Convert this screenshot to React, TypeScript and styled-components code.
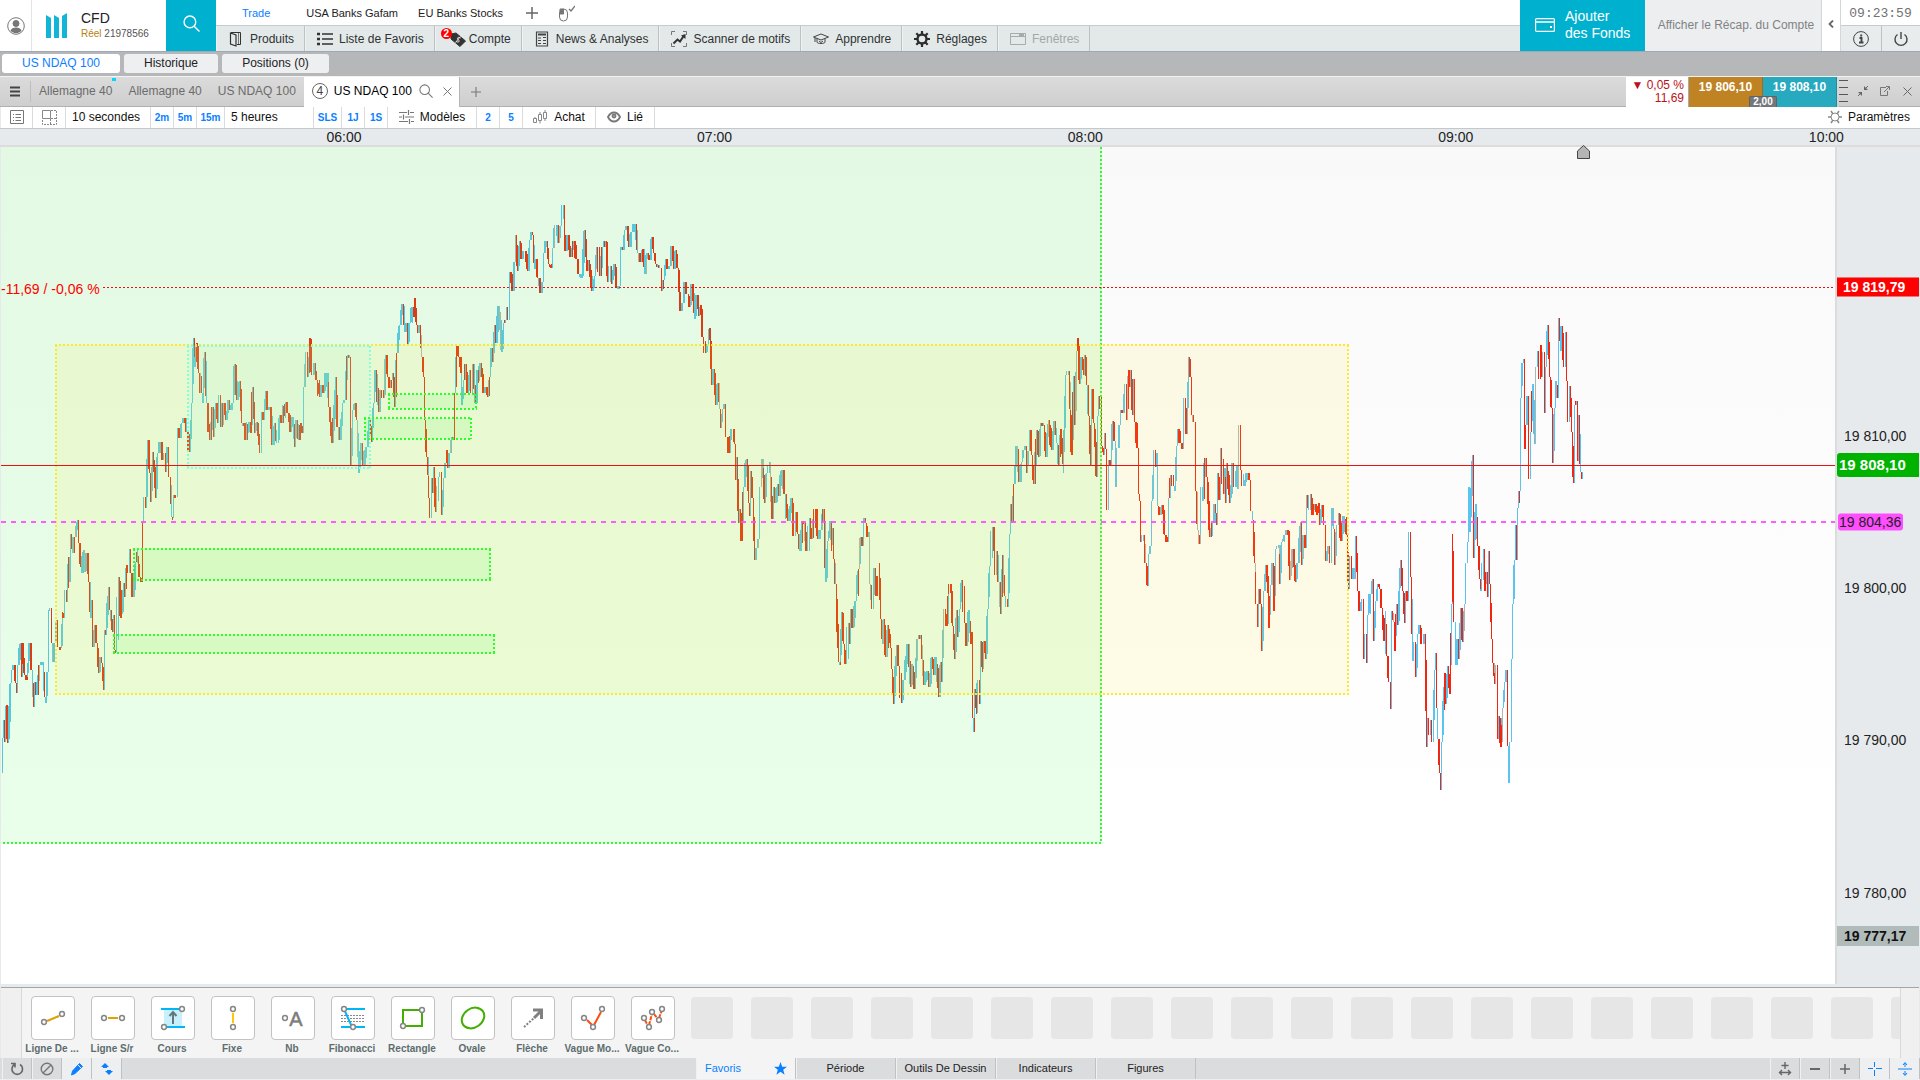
import React from "react";
import styled, { createGlobalStyle } from "styled-components";

const blue = "#0a80ff";
const teal = "#00b1cf";
const line = "#c3c8ca";

const Global = createGlobalStyle`
  * { box-sizing: border-box; }
  body { margin: 0; background: #fff; }
  body, button { font-family: "Liberation Sans", Arial, sans-serif; font-size: 12px; color: #222; }
  button { border: 0; margin: 0; padding: 0; background: none; cursor: pointer; white-space: nowrap; }
  svg { display: block; flex: none; }
`;

const Page = styled.div`
  display: flex;
  flex-direction: column;
  min-height: 100vh;
  overflow: hidden;
  background: #e6eaed;
`;

/* ---------- header ---------- */
const Header = styled.header`
  display: flex;
  height: 52px;
  background: #fff;
  border-bottom: 1px solid #9fa8b8;
`;
const Avatar = styled.button`
  width: 32px;
  display: grid;
  place-items: center;
  border-right: 1px solid #e2e4e5;
`;
const Brand = styled.div`
  width: 134px;
  display: flex;
  align-items: center;
  gap: 14px;
  padding-left: 14px;
`;
const BrandName = styled.div`
  font-size: 14px;
  line-height: 17px;
  color: #222;
`;
const BrandSub = styled.div`
  font-size: 10px;
  line-height: 14px;
  color: #555;
  white-space: nowrap;
  b { font-weight: 400; color: #b8800f; }
`;
const SearchButton = styled.button`
  width: 50px;
  display: grid;
  place-items: center;
  padding-bottom: 4px;
  background: ${teal};
`;
const HeaderMain = styled.div`
  flex: 1;
  min-width: 0;
`;
const Workspaces = styled.nav`
  display: flex;
  align-items: center;
  height: 25px;
  padding-left: 26px;
`;
const Workspace = styled.button<{ $active?: boolean; $gap: number }>`
  margin-right: ${(p) => p.$gap}px;
  font-size: 11px;
  color: ${(p) => (p.$active ? blue : "#222")};
`;
const WorkspaceIcon = styled.button`
  margin: 0 8px;
  width: 18px;
  display: grid;
  place-items: center;
`;
const MainNav = styled.nav`
  display: flex;
  height: 26px;
  background: #e3e9e9;
  border-top: 1px solid #c6cbcb;
`;
const NavItem = styled.button`
  display: flex;
  align-items: center;
  gap: 6px;
  padding: 0 10px 0 12px;
  border-right: 1px solid #bcc1c2;
  box-shadow: inset 1px 0 #eef2f2;
  color: #303234;
  &:disabled { color: #a2a7a8; }
`;
const IconBox = styled.span`
  position: relative;
  width: 16px;
  height: 20px;
  display: grid;
  place-items: center;
`;
const Badge = styled.span`
  position: absolute;
  left: -6px;
  top: -1px;
  width: 11px;
  height: 11px;
  border-radius: 6px;
  background: #f00;
  color: #fff;
  font: bold 10px/11px "Liberation Sans", sans-serif;
  text-align: center;
`;
const AddFunds = styled.button`
  width: 125px;
  display: flex;
  align-items: center;
  gap: 10px;
  padding: 0 0 2px 15px;
  background: ${teal};
  color: #fff;
  font-size: 14px;
  line-height: 17px;
  text-align: left;
`;
const Recap = styled.button`
  width: 177px;
  background: #edeef0;
  border-right: 1px solid #d4d6d8;
  color: #808284;
  padding: 0 0 2px 6px;
`;
const Collapse = styled.button`
  width: 19px;
  display: grid;
  place-items: center;
  border-right: 1px solid #d4d6d8;
  padding-bottom: 4px;
`;
const SystemBox = styled.div`
  width: 79px;
`;
const Clock = styled.div`
  height: 25px;
  font: 13px/27px "Liberation Mono", monospace;
  color: #707274;
  text-align: center;
`;
const SystemButtons = styled.div`
  display: grid;
  grid-template-columns: 1fr 1fr;
  height: 26px;
  border-top: 1px solid #c6cbcb;
  background: #e8ecec;
`;
const SystemButton = styled.button`
  display: grid;
  place-items: center;
  & + & { border-left: 1px solid #bcc1c2; }
`;

/* ---------- window tabs ---------- */
const ModuleBar = styled.nav`
  display: flex;
  gap: 4px;
  height: 24px;
  padding: 2px 2px 3px;
  background: #b6b7b9;
`;
const ModuleTab = styled.button<{ $active?: boolean; $w: number }>`
  width: ${(p) => p.$w}px;
  padding-bottom: 2px;
  border-radius: 3px;
  background: ${(p) => (p.$active ? "#fff" : "#eeeff1")};
  color: ${(p) => (p.$active ? blue : "#222")};
`;
const TabRow = styled.div`
  display: flex;
  height: 31px;
  border-top: 1px solid #f2f2f2;
  background: linear-gradient(#dbdbdb, #cecece);
`;
const TabStrip = styled.div`
  flex: 1;
  display: flex;
  border-bottom: 1px solid #b0b0b0;
`;
const MenuButton = styled.button`
  width: 31px;
  margin: 4px 0;
  display: grid;
  place-items: center;
  border-right: 1px solid #bdbdbd;
`;
const ChartTab = styled.button<{ $new?: boolean }>`
  position: relative;
  padding: 0 8px 2px;
  color: #6b6b6b;
  &::after {
    content: "";
    display: ${(p) => (p.$new ? "block" : "none")};
    position: absolute;
    right: 4px;
    top: 1px;
    width: 4px;
    height: 3px;
    background: #00d8ff;
  }
`;
const ActiveTab = styled.div`
  display: flex;
  align-items: center;
  gap: 6px;
  width: 156px;
  padding: 0 0 2px 8px;
  margin-bottom: -1px;
  background: #fff;
  border-right: 1px solid #b5b5b5;
  color: #000;
  white-space: nowrap;
`;
const Count = styled.span`
  width: 16px;
  height: 16px;
  border: 1px solid #666;
  border-radius: 8px;
  text-align: center;
  line-height: 14px;
  color: #444;
`;
const AddTab = styled.button`
  width: 32px;
  display: grid;
  place-items: center;
`;
const Change = styled.div`
  width: 62px;
  padding: 2px 4px 0 0;
  background: #fff;
  text-align: right;
  font-size: 12px;
  line-height: 13px;
  color: #bb1119;
`;
const Quotes = styled.div`
  position: relative;
  display: flex;
  margin-right: 4px;
  border-left: 1px solid #aaa;
`;
const Quote = styled.button<{ $bg: string }>`
  width: 74px;
  padding-bottom: 10px;
  background: ${(p) => p.$bg};
  color: #fff;
  font-weight: bold;
  border-right: 1px solid rgba(60, 60, 60, 0.3);
`;
const Spread = styled.span`
  position: absolute;
  left: 60px;
  bottom: 0;
  width: 28px;
  height: 11px;
  background: #74787a;
  border: 1px solid #5f6365;
  border-bottom: 0;
  border-radius: 2px 2px 0 0;
  color: #fff;
  font: bold 10px/10px "Liberation Sans", sans-serif;
  text-align: center;
`;
const WindowTools = styled.div`
  display: flex;
  align-items: center;
  gap: 6px;
  width: 81px;
  margin-left: -2px;
  padding-bottom: 1px;
  border-bottom: 1px solid #b0b0b0;
`;
const WindowButton = styled.button`
  width: 16px;
  display: grid;
  place-items: center;
`;

/* ---------- chart toolbar ---------- */
const Toolbar = styled.div`
  display: flex;
  height: 21px;
  margin-left: 1px;
  background: #fff;
`;
const ToolCell = styled.button<{ $w: number; $quick?: boolean; $left?: boolean }>`
  display: flex;
  align-items: center;
  justify-content: ${(p) => (p.$left ? "flex-start" : "center")};
  padding: 0 0 1px ${(p) => (p.$left ? 6 : 0)}px;
  gap: 6px;
  width: ${(p) => p.$w}px;
  border-right: 1px solid #d9dcde;
  color: ${(p) => (p.$quick ? blue : "#111")};
  font-size: ${(p) => (p.$quick ? 10 : 12)}px;
  font-weight: ${(p) => (p.$quick ? "bold" : "normal")};
`;
const Settings = styled.button`
  display: flex;
  align-items: center;
  gap: 6px;
  margin-left: auto;
  padding: 0 10px 1px 0;
  color: #111;
`;

/* ---------- chart ---------- */
const TimeAxis = styled.div`
  position: relative;
  height: 19px;
  border-top: 1px solid ${line};
  border-bottom: 2px solid #dcdcdc;
  background: #e6eaed;
`;
const TimeLabel = styled.span`
  position: absolute;
  top: 0;
  transform: translateX(-50%);
  font-size: 14px;
  line-height: 16px;
`;
const ChartRow = styled.div`
  flex: 1;
  display: flex;
  min-height: 480px;
  padding: 0 1px;
`;
const Plot = styled.div`
  position: relative;
  flex: 1;
  min-width: 0;
  background: linear-gradient(#f9f9f9, #fff 85%);
`;
const PlotSvg = styled.svg`
  position: absolute;
  inset: 0;
  width: 100%;
  height: 100%;
  overflow: visible;
`;
const Variation = styled.span`
  position: absolute;
  left: 0;
  transform: translateY(-50%);
  padding-top: 3px;
  color: #f00;
  font-size: 14px;
  line-height: 16px;
`;
const PriceAxis = styled.div`
  position: relative;
  width: 84px;
  border-left: 2px solid #dcdcdc;
`;
type TagKind = "plain" | "open" | "last" | "level" | "low";
const tagCss: Record<TagKind, string> = {
  plain: "padding-left: 7px; height: 20px; color: #222;",
  open: "padding-left: 6px; height: 19px; background: #f00; color: #fff; font-weight: bold;",
  last: "padding-left: 2px; height: 24px; background: #00b300; color: #fff; font-weight: bold; font-size: 15px; border-radius: 3px 0 0 3px;",
  level: "left: 1px; right: 16px; padding-left: 1px; height: 17px; background: #ff4dff; color: #222; border-radius: 3px;",
  low: "padding-left: 7px; height: 20px; background: #b1bbb9; color: #111; font-weight: bold;",
};
const PriceTag = styled.span<{ $kind: TagKind }>`
  position: absolute;
  left: 0;
  right: 0;
  display: flex;
  align-items: center;
  transform: translateY(-50%);
  font-size: 14px;
  white-space: nowrap;
  ${(p) => tagCss[p.$kind]}
`;

/* ---------- drawing tools ---------- */
const Palette = styled.div`
  display: flex;
  height: 74px;
  margin: 0 1px;
  border-top: 3px solid #e6eaed;
  background: #f4f4f4;
  box-shadow: inset 0 1px #a3a6a9;
`;
const Gutter = styled.div<{ $right?: boolean }>`
  width: ${(p) => (p.$right ? 19 : 21)}px;
  margin-top: 1px;
  background: #f0f0f0;
  border: solid #d6d8da;
  border-width: ${(p) => (p.$right ? "0 0 0 1px" : "0 1px 0 0")};
`;
const Tools = styled.div`
  flex: 1;
  min-width: 0;
  display: flex;
  overflow: hidden;
  padding-top: 9px;
`;
const Tool = styled.button`
  flex: none;
  width: 60px;
  display: flex;
  flex-direction: column;
  align-items: center;
  gap: 3px;
  padding-left: 2px;
`;
const ToolFace = styled.span`
  width: 44px;
  height: 44px;
  display: grid;
  place-items: center;
  background: #fff;
  border: 1px solid #c2c2c2;
  border-radius: 4px;
`;
const ToolName = styled.span`
  margin-left: -2px;
  text-align: center;
  font-size: 10px;
  line-height: 12px;
  font-weight: bold;
  color: #5d6d6e;
`;
const Slot = styled.div`
  flex: none;
  width: 42px;
  height: 42px;
  margin: 1px 9px;
  background: #e6e6e6;
  border-radius: 4px;
`;

/* ---------- footer ---------- */
const Footer = styled.footer`
  display: flex;
  height: 22px;
  padding: 0 0 0 2px;
  border-bottom: 1px solid #eceeef;
  background: #dbdcde;
`;
const FootButton = styled.button<{ $on?: boolean }>`
  width: 30px;
  display: grid;
  place-items: center;
  border-right: 1px solid #bfc1c3;
  box-shadow: inset 1px 0 #f0f0f1;
  background: ${(p) => (p.$on ? "#eeeff1" : "transparent")};
`;
const Spacer = styled.div<{ $grow: number }>`
  flex: ${(p) => p.$grow} 0 0;
`;
const FootTab = styled.button<{ $active?: boolean }>`
  width: 100px;
  display: flex;
  align-items: center;
  justify-content: ${(p) => (p.$active ? "space-between" : "center")};
  padding: ${(p) => (p.$active ? "0 8px 1px 9px" : "0 0 1px")};
  border-right: 1px solid #bfc1c3;
  box-shadow: inset 1px 0 #f0f0f1;
  background: ${(p) => (p.$active ? "#f4f4f4" : "transparent")};
  color: ${(p) => (p.$active ? blue : "#222")};
  font-size: 11px;
`;

/* ---------- small icons ---------- */
type IconProps = { w?: number; h?: number; box?: string; color?: string; sw?: number; children: React.ReactNode };
const Icon = ({ w = 16, h = 16, box, color = "#444", sw = 1, children }: IconProps) => (
  <svg width={w} height={h} viewBox={box ?? `0 0 ${w} ${h}`} fill="none" stroke={color} strokeWidth={sw} aria-hidden="true">
    {children}
  </svg>
);
const Dot = ({ x, y }: { x: number; y: number }) => <circle cx={x} cy={y} r="2.4" stroke="#858585" strokeWidth="1.5" fill="#fff" />;

const navItems: { name: string; icon: React.ReactNode; badge?: string; off?: boolean }[] = [
  { name: "Produits", icon: <Icon color="#333"><path d="M3 1.500h9.500v12H9" /><path d="M2.500 2L8 4v11L2.500 13z" strokeWidth="1.200" /><path d="M10.500 2v11" stroke="#777" /></Icon> },
  { name: "Liste de Favoris", icon: <Icon sw={1.6} color="#333"><path d="M5 3h11M5 8h11M5 13h11" /><path d="M0 3h3M0 8h3M0 13h3" strokeWidth="2.600" /></Icon> },
  { name: "Compte", badge: "2", icon: <Icon w={20}><path d="M4 3l5-1 9.500 8-5.500 5.500L4 8z" fill="#333" stroke="#333" strokeLinejoin="round" /><path d="M13.500 7c-3-2-4 1-2 2s0 3-2.500 1.500M13.500 5.500l-5 6" stroke="#e3e9e9" /></Icon> },
  { name: "News & Analyses", icon: <Icon><path d="M2.500 1h11v14h-11z" strokeWidth="1.2" /><path d="M4 3.500h8" strokeWidth="2" /><path d="M4 7h3M9 6.500h3M4 9.500h3M9 9.500h3M4 12.500h3M9 12.500h3" /></Icon> },
  { name: "Scanner de motifs", icon: <Icon color="#333"><path d="M.5 4V.5H4M12 .5h3.500V4M15.500 12v3.500H12M4 15.500H.5V12" stroke="#777" /><path d="M2.500 12.500l4-4 2.500 2 4-6" strokeWidth="2" /><path d="M10 4.500l4.500-1.500v5z" fill="#333" stroke="none" /></Icon> },
  { name: "Apprendre", icon: <Icon><path d="M.5 6L8 3l7.500 3L8 9zM4 7.500v3.500c0 2 8 2 8 0V7.500M2 7v4M6 10l2 1.500 2-1.500" /></Icon> },
  { name: "Réglages", icon: <Icon color="#2d2d2d"><circle cx="8" cy="8" r="4.500" strokeWidth="2.400" /><path d="M8 0v3M8 13v3M0 8h3M13 8h3M2.300 2.300l2.200 2.200M11.500 11.500l2.200 2.200M13.700 2.300l-2.200 2.200M4.500 11.500l-2.200 2.200" strokeWidth="2.200" /></Icon> },
  { name: "Fenêtres", off: true, icon: <Icon color="#a5aaaa"><path d="M.5 2.500h15v11H.5zM.5 5.500h15" /><path d="M9 4h5" strokeWidth="2" /></Icon> },
];

const gold = "#e0a000";
const cyan = "#00b7f5";
const green = "#41b000";
const orange = "#ff4c0d";
const tools: { name: string; art: React.ReactNode }[] = [
  { name: "Ligne De ...", art: <><path d="M8 20l12-5" stroke={gold} strokeWidth="2" /><Dot x={5} y={21} /><Dot x={23} y={13} /></> },
  { name: "Ligne S/r", art: <><path d="M9 17h10" stroke={gold} strokeWidth="2" /><Dot x={5} y={17} /><Dot x={23} y={17} /></> },
  { name: "Cours", art: <><path d="M5 8h18v18H5z" fill="#c8effc" stroke="none" /><path d="M2 8h18M8 26h18" stroke={cyan} strokeWidth="2" /><path d="M14 23V12M10.500 15l3.500-4 3.500 4" stroke="#66777c" strokeWidth="2" /><Dot x={23} y={8} /><Dot x={5} y={26} /></> },
  { name: "Fixe", art: <><path d="M14 12v10" stroke="#ffc800" strokeWidth="2" /><Dot x={14} y={8} /><Dot x={14} y={26} /></> },
  { name: "Nb", art: <><Dot x={6} y={17} /><text x="17" y="25" textAnchor="middle" fontSize="20" fontFamily="Liberation Sans, sans-serif" fill="#7c7c7c" stroke="#7c7c7c" strokeWidth=".5">A</text></> },
  { name: "Fibonacci", art: <><path d="M2 14.500h24M2 17.500h24M2 20.500h24" stroke="#888" strokeDasharray="2 1" /><path d="M8 8h18M2 26h24M5 8l8 18" stroke={cyan} strokeWidth="2" /><Dot x={5} y={8} /><Dot x={14} y={26} /></> },
  { name: "Rectangle", art: <><path d="M4 9h19v16H4z" stroke={green} strokeWidth="2" /><Dot x={23} y={9} /><Dot x={4} y={25} /></> },
  { name: "Ovale", art: <ellipse cx="14" cy="17" rx="12" ry="9.500" transform="rotate(-35 14 17)" stroke={green} strokeWidth="2" /> },
  { name: "Flèche", art: <><path d="M5 26l10-9" stroke="#808080" strokeWidth="2" strokeDasharray="2 1.500" /><path d="M15 17l7-7M14 9h8.500v9" stroke="#808080" strokeWidth="3" /></> },
  { name: "Vague Mo...", art: <><path d="M8 19l5 5M15 24l7-13" stroke={orange} strokeWidth="2" /><Dot x={5} y={17} /><Dot x={14} y={26} /><Dot x={23} y={8} /></> },
  { name: "Vague Co...", art: <><path d="M6 19l3 6M10 24l3-11M15 13l4 5M20 17l3-8" stroke={orange} strokeWidth="2" strokeDasharray="4 1" /><Dot x={5} y={17} /><Dot x={10} y={26} /><Dot x={13} y={11} /><Dot x={20} y={19} /><Dot x={23} y={8} /></> },
];

/* ---------- price series ----------
   Each run keeps its turning points on its own grid: origin plus units per pixel. */
type Run = { x0: number; y0: number; kx: number; ky: number; pts: string };
const runs: Run[] = [
  {
    x0: 0, y0: 260, kx: 2.8, ky: 3,
    pts: `7,1540 7,1435 10,1380 15,1445 20,1335 21,1450 30,1270 33,1230 40,1215 45,1270 48,1300 50,1215 58,1150 62,1250 63,1150 70,1245 77,1260 85,1150 90,1230 95,1340 99,1265 105,1305 112,1215 119,1205 125,1310 128,1330 135,1235 136,1050 141,1045 145,1150 149,1205 155,1150 160,1080 164,1160 170,1165 175,1055 180,1075 183,990 187,1025 192,890 195,965 198,822 204,880 210,830 219,780 222,850 229,940 234,870 238,935 243,880 250,965 256,1075 257,1020 260,1160 266,1095 272,1150 277,1240 282,1190 285,1210 290,1290 293,1110 298,1125 306,980 309,1050 316,1115 320,1065 323,1170 326,1175 332,975 333,950 339,1075 346,970 350,1010 356,915 360,940 364,868 367,938 374,1010 380,905 385,870 392,950 397,965 401,790 405,710 408,745 413,540 419,640 424,725 429,575 436,715 441,580 450,545 456,600 460,580 464,635 471,562 475,650 481,770 485,775 488,705 494,710 498,505 505,535 510,490 517,475 523,515 531,575 537,430 542,235 547,320 553,248 558,340 565,400 569,430 575,275 580,430 589,540 597,440 597,530 605,430 611,490 615,405 620,500 627,430 632,480 640,420 645,450 653,430 659,313 664,420 671,362 677,490 684,490 690,540 700,485 703,520 708,380 713,520 719,485 729,580 733,455 738,480 744,393 750,450 757,440 765,555 771,490 777,550 783,465 790,490 800,425 807,460 814,515 819,470 825,560 831,480 836,540 842,490 847,520 850,380 858,275 862,350 869,235 875,345 881,310 888,360 896,410 902,375 908,400 915,340 922,440 932,550 940,350 947,500 952,540 960,430 966,420 973,285 979,292 982,615 988,450 995,430 1000,480 1006,640 1012,550 1020,615 1028,560 1036,480 1041,545 1047,430 1052,330 1060,455 1068,390 1074,415 1080,285 1086,350 1092,385 1098,360 1101,340 1106,440 1112,280 1120,195 1129,133 1134,215 1140,190 1141,255 1148,190 1155,140 1158,170 1163,115 1168,195 1174,220 1176,195 1181,290 1187,350 1190,480 1195,590 1202,715 1205,775 1209,655 1213,700 1216,620 1222,755 1228,650 1233,635 1237,765 1243,655 1248,610 1250,570 1254,625 1260,580 1266,530 1271,540 1275,400 1280,258 1285,290 1292,340 1294,435 1300,360 1306,312 1311,400 1316,330 1320,400 1324,312 1332,430 1337,330 1340,370 1347,310 1354,400 1360,380 1366,410 1372,350 1377,265 1381,305 1386,195 1390,250 1398,138 1405,275 1410,190 1416,180 1420,140 1424,180 1427,35`,
  },
  {
    x0: 500, y0: 180, kx: 2.529, ky: 2.8,
    pts: `24,257 32,310 37,230 40,155 46,255 50,172 56,220 62,200 70,255 75,168 80,145 84,155 88,250 92,220 96,275 103,315 109,285 112,205 120,172 124,235 131,245 135,190 143,127 149,175 155,130 161,70 165,200 172,155 179,215 187,170 195,220 200,262 208,275 215,140 219,255 226,225 233,310 240,270 246,187 252,268 260,187 268,172 274,285 280,240 284,290 289,235 296,300 304,298 305,187 310,195 316,140 320,130 325,188 333,145 342,122 349,205 356,230 362,192 367,262 373,205 380,225 384,160 389,205 394,235 400,238 406,245 409,312 415,280 419,220 424,250 430,240 436,185 441,250 446,197 450,245 457,368 463,345 469,285 474,320 480,355 486,290 494,390 499,322 503,380 508,350 514,440 520,485 525,460 530,415 536,575 541,530 547,630 552,568 557,640 560,695 565,640 570,628 573,720 580,765 588,698 594,740 597,840 600,775 604,960 607,920 612,1010 616,860 625,782 629,905 632,942 635,815 641,890 646,1065 651,1030 656,1005 659,860 664,780 671,905 676,820 682,790 688,950 692,860 696,905 703,850 706,885 716,812 722,880 729,955 738,890 742,998 748,930 753,990 758,1040 765,955 770,960 777,1040 783,945 790,1005 798,922 804,1005 811,980 820,922 825,1125 830,1010 837,955 838,1040 843,975 846,1060 850,1130 857,1350 861,1355 866,1210 870,1300 876,1355 882,1240 885,1300 888,1200 892,1255 900,1180 907,1090 912,1000 917,1025 920,945 926,960 930,1000 933,985 936,1130 942,1200 948,1085 952,1165 957,1110 960,1072 964,1230 969,1298 972,1230 977,1335 981,1245 988,1310 992,1370 997,1468 1004,1302 1010,1360 1016,1465 1022,1400 1032,1300 1040,1420 1043,1355 1050,1425 1057,1285 1065,1275 1072,1415 1082,1375 1085,1420 1092,1335 1098,1385 1102,1335 1110,1448 1115,1350 1118,1405 1124,1200 1130,1250 1134,1160 1140,1132 1146,1250 1151,1340 1155,1205 1158,1280 1164,1200 1169,1120 1175,1240 1181,1305 1187,1205 1191,1300 1195,1265 1196,1505 1200,1545 1201,1425 1205,1495 1210,1400 1213,1468 1216,1290 1220,1378 1224,1290 1230,1340 1235,1200 1240,1080 1246,972 1253,1105 1256,1040 1261,1125 1267,1215 1271,1050 1278,1165 1284,1195 1289,990 1293,908 1296,960 1300,850 1308,745 1313,845 1320,790 1325,757 1330,745 1333,820 1338,760 1342,700 1346,770 1350,850 1358,700 1363,775 1367,680 1375,685 1381,775 1388,672 1395,755 1403,675 1408,735 1413,800 1418,698 1425,820 1432,545 1438,535 1443,645 1447,770 1452,550 1454,685 1458,480 1463,443 1467,570 1471,495 1476,545 1480,490 1484,575 1490,660 1494,800 1497,585 1501,680 1509,832 1512,660 1518,605`,
  },
  {
    x0: 1060, y0: 260, kx: 2.8, ky: 2.904,
    pts: `115,395 117,540 122,565 125,503 130,550 133,725 136,580 142,595 148,468 154,525 158,660 161,545 167,480 171,435 176,445 183,360 187,465 192,320 196,370 198,320 203,450 206,345 209,470 217,545 220,680 225,700 228,820 234,800 240,880 247,948 250,855 256,830 257,700 264,553 268,600 270,560 274,715 282,740 289,712 295,800 303,818 306,690 312,625 318,655 322,670 327,540 331,490 338,530 345,550 349,400 355,505 361,283 366,340 370,450 376,470 380,670 386,785 391,825 396,660 400,700 405,575 411,630 420,805 427,765 433,710 440,770 443,620 448,698 452,547 458,680 461,605 466,705 469,590 476,705 485,590 489,660 495,595 499,665 503,480 508,610 514,655 523,620 531,640 536,730 540,755 545,880 550,1000 554,1065 557,955 563,1000 567,1135 572,960 579,885 586,1070 592,945 597,880 600,1020 606,840 612,828 617,940 622,820 630,800 638,785 645,930 653,840 660,935 667,880 674,760 678,885 684,800 690,835 692,682 698,725 702,680 707,740 714,710 720,740 725,705 727,770 733,712 740,770 744,875 750,830 757,880 761,720 766,780 771,885 777,770 780,735 788,815 796,742 803,800 808,955 813,860 817,925 822,895 825,925 829,802 835,960 841,1020 847,985 850,1160 855,1085 859,1170 863,1030 870,970 875,925 879,1105 885,990 890,942 897,955 902,1010 909,1105 911,1020 917,1150 922,1225 926,1305 929,1020 934,1050 937,1135 943,1000 947,1060 954,870 960,960 967,1055 970,960 975,990 979,790 984,920 989,1165 993,1110 998,1210 1003,1085 1009,1060 1015,1115 1021,1085 1027,1415 1031,1330 1035,1380 1039,1335 1043,1400 1049,1190 1051,1140 1055,1300 1059,1390 1064,1490 1068,1540 1070,1400 1077,1200 1081,1290 1087,1180 1092,1260 1097,1000 1099,797 1104,1050 1108,1175 1114,1100 1118,1160 1123,1010 1129,1110 1135,1000 1138,880 1142,820 1146,660 1149,790 1157,565 1160,865 1165,710 1170,830 1175,925 1180,960 1186,840 1191,960 1196,905 1199,980 1200,845 1205,940 1210,1100 1212,1170 1219,1230 1222,1175 1226,1390 1229,1325 1236,1415 1241,1300 1246,1225 1251,1190 1254,1410 1258,1520 1261,1400 1265,1160 1268,1000 1273,870 1276,770 1279,870 1282,720 1288,670 1290,400 1295,300 1298,288 1302,550 1306,480 1311,395 1315,635 1320,500 1325,360 1330,535 1334,310 1338,265 1342,345 1346,248 1350,340 1354,268 1357,445 1362,310 1367,190 1373,340 1378,430 1381,590 1387,430 1388,350 1393,400 1396,320 1398,168 1403,265 1407,192 1412,310 1416,210 1420,350 1424,470 1428,365 1433,500 1438,648 1442,420 1447,410 1451,585 1453,450 1458,615 1463,635`,
  },
];

/* One bar per pixel column; bars overlap their neighbours but stay inside the swing they belong to. */
const buildCandles = () => {
  let seed = 7;
  const rnd = () => (seed = (seed * 16807) % 2147483647) / 2147483647;
  const out = { up: "", down: "", flat: "" };
  for (const run of runs) {
    const pts = run.pts.split(" ").map((s) => {
      const [x, y] = s.split(",").map(Number);
      return [run.x0 + x / run.kx, run.y0 + y / run.ky];
    });
    for (let i = 1; i < pts.length; i++) {
      const [ax, ay] = pts[i - 1];
      const [bx, by] = pts[i];
      const n = Math.max(1, Math.round(bx - ax));
      const hi = Math.min(ay, by);
      const lo = Math.max(ay, by);
      const slice = (lo - hi) / n;
      for (let k = 0; k < n; k++) {
        const x = Math.floor(ax + ((bx - ax) * (k + 0.5)) / n) + 0.5;
        const y1 = ay + ((by - ay) * k) / n;
        const y2 = ay + ((by - ay) * (k + 1)) / n;
        const top = Math.max(hi, Math.min(y1, y2) - slice * 0.3 - rnd() * 14);
        const end = Math.min(lo, Math.max(y1, y2) + slice * 0.3 + rnd() * 14);
        const r = rnd();
        const rising = by < ay !== r < 0.12;
        const key = r > 0.96 ? "flat" : rising ? "up" : "down";
        out[key] += `M${x} ${Math.round(top)}V${Math.round(Math.max(end, top + 3))}`;
      }
    }
  }
  return out;
};
const candles = buildCandles();

const zones = [
  { x: 3, y: 100, x2: 1101, y2: 843, stroke: "#2bff2b", fill: "rgba(50,255,50,.1)" },
  { x: 56, y: 345, x2: 1348, y2: 694, stroke: "#ffe925", fill: "rgba(255,230,30,.1)" },
  { x: 188, y: 346, x2: 370, y2: 468, stroke: "#83ffe0", fill: "rgba(130,255,225,.1)" },
  { x: 389, y: 394, x2: 476, y2: 409, stroke: "#2bff2b", fill: "rgba(50,255,50,.1)" },
  { x: 365, y: 418, x2: 471, y2: 439, stroke: "#2bff2b", fill: "rgba(50,255,50,.1)" },
  { x: 134, y: 549, x2: 490, y2: 580, stroke: "#2bff2b", fill: "rgba(50,255,50,.1)" },
  { x: 114, y: 635, x2: 494, y2: 653, stroke: "#2bff2b", fill: "rgba(50,255,50,.1)" },
];

const priceTop = (price: number) => `${((436 - 147 + (19810 - price) * 15.22) / 837) * 100}%`;
const prices: { text: string; value: number; kind: TagKind }[] = [
  { text: "19 819,79", value: 19819.79, kind: "open" },
  { text: "19 810,00", value: 19810, kind: "plain" },
  { text: "19 808,10", value: 19808.1, kind: "last" },
  { text: "19 804,36", value: 19804.36, kind: "level" },
  { text: "19 800,00", value: 19800, kind: "plain" },
  { text: "19 790,00", value: 19790, kind: "plain" },
  { text: "19 780,00", value: 19780, kind: "plain" },
  { text: "19 777,17", value: 19777.17, kind: "low" },
];
const hours = [6, 7, 8, 9, 10];

const Magnifier = ({ size, color, sw = 1.5 }: { size: number; color: string; sw?: number }) => (
  <svg width={size} height={size} viewBox="0 0 16 16" fill="none" stroke={color} strokeWidth={sw} aria-hidden="true">
    <circle cx="6.500" cy="6.500" r="5.500" />
    <path d="M10.500 10.500l5 5" />
  </svg>
);
const Plus = ({ size = 12, color = "#555", sw = 1.5 }) => (
  <Icon w={size} h={size} box="0 0 12 12" color={color} sw={sw}><path d="M6 0v12M0 6h12" /></Icon>
);

export default function App() {
  return (
    <Page>
      <Global />
      <Header>
        <Avatar aria-label="Profil">
          <Icon w={18} h={18} color="#777">
            <circle cx="9" cy="9" r="8.300" />
            <circle cx="9" cy="6.500" r="3" fill="#777" />
            <path d="M3.500 13.500c1-4 10-4 11 0-2.500 3.500-8.500 3.500-11 0z" fill="#777" stroke="none" />
          </Icon>
        </Avatar>
        <Brand>
          <Icon w={21} h={25}>
            <g fill="#12b5d5" stroke="none">
              <path d="M0 2l5 3v20H0zM8 2l5 3v20H8zM21 0v25h-5V3z" />
            </g>
          </Icon>
          <div>
            <BrandName>CFD</BrandName>
            <BrandSub><b>Réel</b> 21978566</BrandSub>
          </div>
        </Brand>
        <SearchButton aria-label="Rechercher"><Magnifier size={17} color="#fff" sw={1.3} /></SearchButton>
        <HeaderMain>
          <Workspaces>
            <Workspace $active $gap={36}>Trade</Workspace>
            <Workspace $gap={20}>USA Banks Gafam</Workspace>
            <Workspace $gap={12}>EU Banks Stocks</Workspace>
            <WorkspaceIcon aria-label="Ajouter un espace"><Plus color="#666" /></WorkspaceIcon>
            <WorkspaceIcon aria-label="Trading en un clic">
              <Icon w={18} h={18} color="#777">
                <rect x="2.500" y="5" width="8" height="12" rx="4" />
                <path d="M3 5h3.500v5H3z" fill="#777" />
                <path d="M12 5l2 2 4-5" strokeWidth="1.400" />
              </Icon>
            </WorkspaceIcon>
          </Workspaces>
          <MainNav>
            {navItems.map((n) => (
              <NavItem key={n.name} disabled={n.off}>
                <IconBox>{n.icon}{n.badge && <Badge>{n.badge}</Badge>}</IconBox>
                {n.name}
              </NavItem>
            ))}
          </MainNav>
        </HeaderMain>
        <AddFunds>
          <Icon w={20} h={14} color="#fff" sw={1.2}>
            <rect x=".6" y=".6" width="18.800" height="12.800" rx="1" />
            <path d="M1 4h18" strokeWidth="1.500" />
            <path d="M15 9h2" strokeWidth="2" />
          </Icon>
          <span>Ajouter<br />des Fonds</span>
        </AddFunds>
        <Recap>Afficher le Récap. du Compte</Recap>
        <Collapse aria-label="Réduire"><Icon w={6} h={8} color="#666" sw={1.8}><path d="M5 .5L1.500 4 5 7.500" /></Icon></Collapse>
        <SystemBox>
          <Clock>09:23:59</Clock>
          <SystemButtons>
            <SystemButton aria-label="Informations">
              <Icon><circle cx="8" cy="8" r="7.400" /><path d="M8.200 3.500v2M6.500 7h2v4M6 11.500h4.500" strokeWidth="1.900" /></Icon>
            </SystemButton>
            <SystemButton aria-label="Déconnexion">
              <Icon sw={1.400}><path d="M8 1v7M4.500 3.500a6 6 0 1 0 7 0" /></Icon>
            </SystemButton>
          </SystemButtons>
        </SystemBox>
      </Header>

      <ModuleBar>
        <ModuleTab $active $w={118}>US NDAQ 100</ModuleTab>
        <ModuleTab $w={94}>Historique</ModuleTab>
        <ModuleTab $w={107}>Positions (0)</ModuleTab>
      </ModuleBar>

      <TabRow>
        <TabStrip>
          <MenuButton aria-label="Menu"><Icon w={10} h={11} sw={2}><path d="M0 1.500h10M0 5.500h10M0 9.500h10" /></Icon></MenuButton>
          <ChartTab $new>Allemagne 40</ChartTab>
          <ChartTab>Allemagne 40</ChartTab>
          <ChartTab>US NDAQ 100</ChartTab>
          <ActiveTab>
            <Count>4</Count>
            US NDAQ 100
            <WindowButton aria-label="Chercher un produit"><Magnifier size={14} color="#777" sw={1.2} /></WindowButton>
            <WindowButton aria-label="Fermer l'onglet"><Icon w={9} h={9} color="#777"><path d="M.5.5l8 8M8.500.5l-8 8" /></Icon></WindowButton>
          </ActiveTab>
          <AddTab aria-label="Nouvel onglet"><Plus size={10} color="#777" sw={1.3} /></AddTab>
        </TabStrip>
        <Change>▼ 0,05 %<br />11,69</Change>
        <Quotes>
          <Quote $bg="#c08324">19 806,10</Quote>
          <Quote $bg="#27a9c0">19 808,10</Quote>
          <Spread>2,00</Spread>
        </Quotes>
        <WindowTools>
          <Icon w={10} h={28} color="#555"><path d="M0 3.500h9M0 10.500h9M0 17.500h9M0 24.500h9" /></Icon>
          <WindowButton aria-label="Réduire la fenêtre">
            <Icon w={10} h={10} color="#666"><path d="M10 0L7 3M0 10l3-3" /><path d="M6 0v4h4zM4 10V6H0z" fill="#666" stroke="none" /></Icon>
          </WindowButton>
          <WindowButton aria-label="Détacher">
            <Icon w={10} h={10} color="#777"><path d="M6 1.500H.5v8h7V5M4 6l5-5M6 .5h3.500V4" /></Icon>
          </WindowButton>
          <WindowButton aria-label="Fermer"><Icon w={9} h={9} color="#666"><path d="M.5.5l8 8M8.500.5l-8 8" /></Icon></WindowButton>
        </WindowTools>
      </TabRow>

      <Toolbar>
        <ToolCell $w={32} aria-label="Liste">
          <Icon w={14} h={14} color="#777"><path d="M.5.500h13v13H.5zM3 4.500h1M5.500 4.500H11M3 7.500h1M5.500 7.500H11M3 10.500h1M5.500 10.500H11" /></Icon>
        </ToolCell>
        <ToolCell $w={33} aria-label="Disposition">
          <Icon w={15} h={15} color="#888"><path d="M.5.5h8v8h-8z" /><path d="M9 .5h5.500v14H.5V9M9 8.500h5.500M8.500 9v5.500" strokeDasharray="2 1" /></Icon>
        </ToolCell>
        <ToolCell $w={85} $left>10 secondes</ToolCell>
        <ToolCell $w={23} $quick>2m</ToolCell>
        <ToolCell $w={23} $quick>5m</ToolCell>
        <ToolCell $w={28} $quick>15m</ToolCell>
        <ToolCell $w={89} $left>5 heures</ToolCell>
        <ToolCell $w={28} $quick>SLS</ToolCell>
        <ToolCell $w={23} $quick>1J</ToolCell>
        <ToolCell $w={23} $quick>1S</ToolCell>
        <ToolCell $w={89}>
          <Icon w={15} h={14} color="#777" sw={1.200}><path d="M0 2.500h8M11 2.500h4M0 7h3M6 7h9M0 11.500h9M12 11.500h3M9.500 0v5M4.500 4.500v5M10.500 9v5" /></Icon>
          Modèles
        </ToolCell>
        <ToolCell $w={23} $quick>2</ToolCell>
        <ToolCell $w={23} $quick>5</ToolCell>
        <ToolCell $w={73}>
          <Icon w={15} h={14} color="#888"><path d="M.5 8.500h3v4h-3zM5.500 4.500h3v6h-3zM10.500 2.500h3v6h-3zM7 2v2.500M7 10.500v3M12 0v2.500M12 8.500V11M2 7v1.500" /></Icon>
          Achat
        </ToolCell>
        <ToolCell $w={59}>
          <Icon w={14} h={12} color="#777" sw={1.800}><path d="M1 6c3-6 9-6 12 0-3 6-9 6-12 0z" /><circle cx="7" cy="5" r="1.500" /></Icon>
          Lié
        </ToolCell>
        <Settings>
          <Icon w={14} h={14} color="#888"><circle cx="7" cy="7" r="4" /><path d="M0 7h3M11 7h3M3 1l2 3M11 1L9 4M3 13l2-3M11 13l-2-3" strokeWidth="1.500" /></Icon>
          Paramètres
        </Settings>
      </Toolbar>

      <TimeAxis>
        {hours.map((h) => (
          <TimeLabel key={h} style={{ left: `${((344 + (h - 6) * 370.6) / 1920) * 100}%` }}>
            {String(h).padStart(2, "0")}:00
          </TimeLabel>
        ))}
      </TimeAxis>

      <ChartRow>
        <Plot>
          <PlotSvg viewBox="1 147 1834 837" preserveAspectRatio="none" fill="none" role="img" aria-label="US NDAQ 100, 10 secondes">
            <g shapeRendering="crispEdges">
              <path d={candles.flat} stroke="#b0b4b0" />
              <path d={candles.up} stroke="#5bc4ee" />
              <path d={candles.down} stroke="#f2250f" />
              {zones.map((z, i) => (
                <g key={i} strokeWidth="2" stroke={z.stroke} strokeDasharray="2 2">
                  <rect x={i === 0 ? 1 : z.x} y={i === 0 ? 147 : z.y} width={z.x2 - (i === 0 ? 1 : z.x)} height={z.y2 - (i === 0 ? 147 : z.y)} fill={z.fill} stroke="none" />
                  {i === 0 ? (
                    <path d={`M${z.x} ${z.y2}H${z.x2}M${z.x2} 147V${z.y2}`} />
                  ) : (
                    <path d={`M${z.x - 1} ${z.y}H${z.x2 + 1}M${z.x - 1} ${z.y2}H${z.x2 + 1}M${z.x} ${z.y}V${z.y2}M${z.x2} ${z.y}V${z.y2}`} />
                  )}
                </g>
              ))}
              <path d="M103 287.500H1836" stroke="#e81010" strokeDasharray="2 2" />
              <path d="M1 465.500H1836" stroke="#ee1111" />
              <path d="M1 522H1836" stroke="#ff4dff" strokeOpacity=".9" strokeWidth="2" strokeDasharray="5 5" />
            </g>
            <path d="M1577.500 158.500v-7.500l6-5.500 6 5.500v7.500z" fill="#b5b5b5" stroke="#444" />
          </PlotSvg>
          <Variation style={{ top: priceTop(19819.79) }}>-11,69 / -0,06 %</Variation>
        </Plot>
        <PriceAxis>
          {prices.map((p) => (
            <PriceTag key={p.text} $kind={p.kind} style={{ top: priceTop(p.value) }}>{p.text}</PriceTag>
          ))}
        </PriceAxis>
      </ChartRow>

      <Palette>
        <Gutter />
        <Tools>
          {tools.map((t) => (
            <Tool key={t.name}>
              <ToolFace><Icon w={28} h={34}>{t.art}</Icon></ToolFace>
              <ToolName>{t.name}</ToolName>
            </Tool>
          ))}
          {Array.from({ length: 21 }, (_, i) => <Slot key={i} />)}
        </Tools>
        <Gutter $right />
      </Palette>

      <Footer>
        <FootButton aria-label="Réinitialiser"><Icon w={14} h={14} color="#666" sw={1.600}><path d="M10 2.500a5.300 5.300 0 1 1-5.500 0M1 1.500h4v4" /></Icon></FootButton>
        <FootButton aria-label="Masquer"><Icon w={14} h={14} color="#777" sw={1.400}><circle cx="7" cy="7" r="5.800" /><path d="M3 11l8-8" /></Icon></FootButton>
        <FootButton $on aria-label="Dessiner"><Icon w={14} h={14} color={blue}><path d="M1.500 13l1-4 7-7.500 3 3-7.500 7z" fill={blue} /><path d="M8 3l3 3" stroke="#eeeff1" /></Icon></FootButton>
        <FootButton $on aria-label="Trier"><Icon w={12} h={12} color={blue}><path d="M4 0l4 4H6v1H2V4H0zM8 12L4 8h2V7h4v1h2z" fill={blue} stroke="none" /></Icon></FootButton>
        <Spacer $grow={1} />
        <FootTab $active>
          Favoris
          <Icon w={13} h={13}><path d="M6.500 0l1.700 4.700h4.800L9.200 7.800l1.400 5-4.100-3-4.100 3 1.400-5L0 4.700h4.800z" fill={blue} stroke="none" /></Icon>
        </FootTab>
        <FootTab>Période</FootTab>
        <FootTab>Outils De Dessin</FootTab>
        <FootTab>Indicateurs</FootTab>
        <FootTab>Figures</FootTab>
        <Spacer $grow={1} />
        <FootButton aria-label="Ajuster"><Icon w={14} h={14} color="#666" sw={1.400}><path d="M7 0v7M3.500 3.500h7M1.500 10.500h11M4 8l-2.500 2.500L4 13M10 8l2.500 2.500L10 13" /></Icon></FootButton>
        <FootButton aria-label="Zoom arrière"><Icon w={10} h={10} color="#666" sw={2}><path d="M0 5h10" /></Icon></FootButton>
        <FootButton aria-label="Zoom avant"><Plus size={10} color="#666" sw={1.800} /></FootButton>
        <FootButton $on aria-label="Réticule"><Icon w={14} h={14} color={blue}><path d="M6.500 0v5M6.500 8v6M0 6.500h5M8 6.500h6" /></Icon></FootButton>
        <FootButton $on aria-label="Échelle verticale"><Icon w={14} h={14} color={blue}><path d="M0 7h14M7 1v4M7 9v4M5 3l2-2.500L9 3M5 11l2 2.500L9 11" /></Icon></FootButton>
      </Footer>
    </Page>
  );
}
